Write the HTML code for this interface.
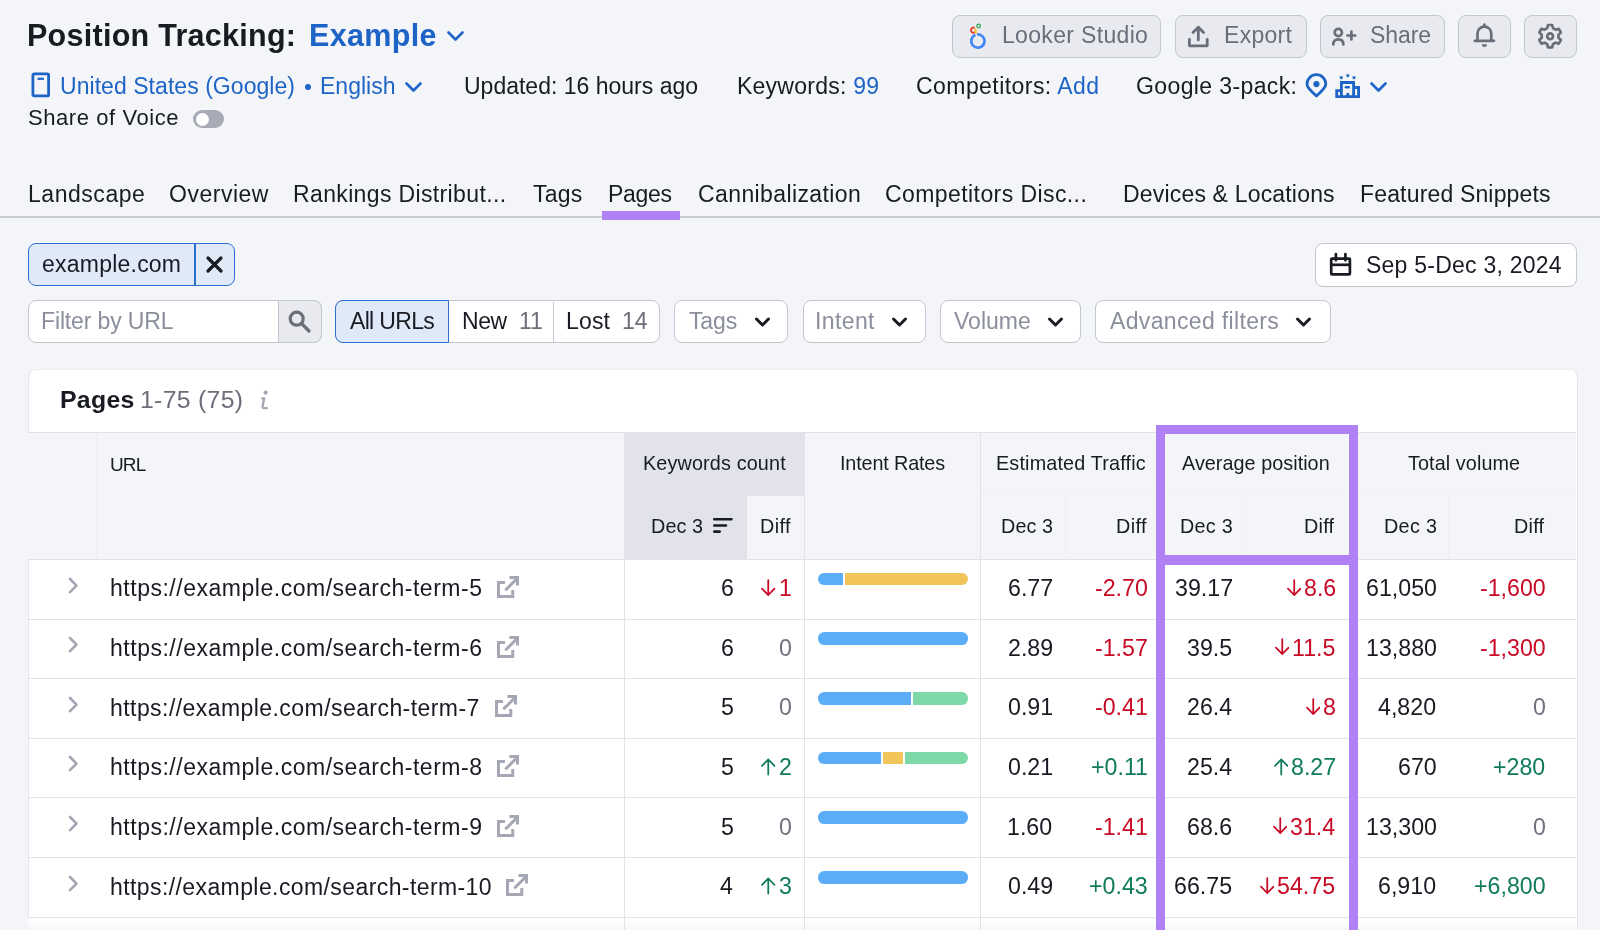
<!DOCTYPE html>
<html><head><meta charset="utf-8"><style>
html,body{margin:0;padding:0;}
body{width:1600px;height:930px;overflow:hidden;position:relative;background:#f4f5f9;font-family:"Liberation Sans",sans-serif;}
.t{will-change:transform;position:absolute;white-space:nowrap;line-height:1;}
.b{position:absolute;}
</style></head><body>
<div class="t" id="t1" style="left:27.00px;top:20.18px;font-size:30.5px;color:#191b23;font-weight:700;letter-spacing:0.272px;">Position Tracking:</div>
<div class="t" id="t2" style="left:309.00px;top:20.18px;font-size:30.5px;color:#1e64c6;font-weight:700;letter-spacing:0.350px;">Example</div>
<svg class="b" style="left:446px;top:30px" width="19" height="13" viewBox="0 0 19 13"><path d="M2.5 2.5 L9.5 9.5 L16.5 2.5" fill="none" stroke="#1e64c6" stroke-width="2.6" stroke-linecap="round" stroke-linejoin="round"/></svg>
<svg class="b" style="left:31px;top:72px" width="20" height="26" viewBox="0 0 20 26"><rect x="1.9" y="1.9" width="15.7" height="22" rx="1.2" fill="none" stroke="#1e64c6" stroke-width="2.8"/><path d="M6.5 6.8 H13" stroke="#1e64c6" stroke-width="2.2"/></svg>
<div class="t" id="t3" style="left:59.80px;top:74.53px;font-size:23px;color:#1e64c6;letter-spacing:0.048px;">United States (Google)</div>
<div class="b" style="left:304.5px;top:83.5px;width:6.5px;height:6.5px;background:#1e64c6;border-radius:50%"></div>
<div class="t" id="t4" style="left:320.00px;top:74.53px;font-size:23px;color:#1e64c6;">English</div>
<svg class="b" style="left:404px;top:81px" width="19" height="13" viewBox="0 0 19 13"><path d="M2.5 2.5 L9.5 9.5 L16.5 2.5" fill="none" stroke="#1e64c6" stroke-width="2.6" stroke-linecap="round" stroke-linejoin="round"/></svg>
<div class="t" id="t5" style="left:464.00px;top:74.53px;font-size:23px;color:#191b23;">Updated: 16 hours ago</div>
<div class="t" id="t6" style="left:736.60px;top:74.53px;font-size:23px;color:#191b23;letter-spacing:0.239px;">Keywords: <span style="color:#1e64c6">99</span></div>
<div class="t" id="t7" style="left:916.00px;top:74.53px;font-size:23px;color:#191b23;letter-spacing:0.442px;">Competitors: <span style="color:#1e64c6">Add</span></div>
<div class="t" id="t8" style="left:1136.00px;top:74.53px;font-size:23px;color:#191b23;letter-spacing:0.385px;">Google 3-pack:</div>
<svg class="b" style="left:1304px;top:72px" width="26" height="28" viewBox="0 0 26 28"><path d="M12.4 24.0 C6.5 19 3.0 15.5 3.0 12.1 A9.4 9.4 0 0 1 21.8 12.1 C21.8 15.5 18.3 19 12.4 24.0 Z" fill="none" stroke="#1e64c6" stroke-width="2.8" stroke-linejoin="round"/><circle cx="12.4" cy="12.1" r="3.1" fill="#1e64c6"/></svg>
<svg class="b" style="left:1334px;top:72px" width="28" height="28" viewBox="0 0 28 28"><g fill="#1e64c6"><path fill-rule="evenodd" d="M1.3 26 V17.25 H6 V9.1 H21 V14.1 H26 V26 Z M4.1 20 H6 V23.2 H4.1 Z M8.8 11.9 H18.2 V23.2 H15.4 V22.3 A1.58 1.58 0 0 0 12.25 22.3 V23.2 H8.8 Z M21 16.9 H23.2 V23.2 H21 Z"/><rect x="10.7" y="14.1" width="5.3" height="2.5" rx="1.25"/><path d="M7.25 3.20 L7.87 4.75 L9.53 4.86 L8.25 5.92 L8.66 7.54 L7.25 6.65 L5.84 7.54 L6.25 5.92 L4.97 4.86 L6.63 4.75ZM13.80 1.20 L14.42 2.75 L16.08 2.86 L14.80 3.92 L15.21 5.54 L13.80 4.65 L12.39 5.54 L12.80 3.92 L11.52 2.86 L13.18 2.75ZM20.00 3.20 L20.62 4.75 L22.28 4.86 L21.00 5.92 L21.41 7.54 L20.00 6.65 L18.59 7.54 L19.00 5.92 L17.72 4.86 L19.38 4.75Z"/></g></svg>
<svg class="b" style="left:1369px;top:81px" width="20" height="13" viewBox="0 0 20 13"><path d="M2.5 2.5 L9.5 9.5 L16.5 2.5" fill="none" stroke="#1e64c6" stroke-width="2.6" stroke-linecap="round" stroke-linejoin="round"/></svg>
<div class="t" id="t9" style="left:28.40px;top:107.27px;font-size:22px;color:#191b23;letter-spacing:0.575px;">Share of Voice</div>
<div class="b" style="left:193px;top:110px;width:31px;height:18px;background:#a8aab5;border-radius:9px"></div>
<div class="b" style="left:195.5px;top:112.5px;width:13.0px;height:13.0px;background:#fff;border-radius:50%"></div>
<div class="b" style="left:952px;top:14.6px;width:209px;height:43.0px;background:#e9eaf0;border:1.7px solid #c3c6ce;border-radius:8px;box-sizing:border-box"></div>
<div class="b" style="left:1174.5px;top:14.6px;width:132.0px;height:43.0px;background:#e9eaf0;border:1.7px solid #c3c6ce;border-radius:8px;box-sizing:border-box"></div>
<div class="b" style="left:1320px;top:14.6px;width:124.5px;height:43.0px;background:#e9eaf0;border:1.7px solid #c3c6ce;border-radius:8px;box-sizing:border-box"></div>
<div class="b" style="left:1458px;top:14.6px;width:53px;height:43.0px;background:#e9eaf0;border:1.7px solid #c3c6ce;border-radius:8px;box-sizing:border-box"></div>
<div class="b" style="left:1524px;top:14.6px;width:53px;height:43.0px;background:#e9eaf0;border:1.7px solid #c3c6ce;border-radius:8px;box-sizing:border-box"></div>
<div class="t" id="t10" style="left:1002.00px;top:23.83px;font-size:23px;color:#6b6e7a;letter-spacing:0.327px;">Looker Studio</div>
<div class="t" id="t11" style="left:1224.00px;top:23.83px;font-size:23px;color:#6b6e7a;letter-spacing:0.300px;">Export</div>
<div class="t" id="t12" style="left:1370.00px;top:23.83px;font-size:23px;color:#6b6e7a;letter-spacing:-0.094px;">Share</div>
<svg class="b" style="left:966px;top:20px" width="24" height="32" viewBox="0 0 24 32"><path d="M10.98 14.47 A6.6 6.6 0 1 1 9.43 14.88" fill="none" stroke="#4285f4" stroke-width="2.6"/><path d="M8.77 7.85 A2.6 2.6 0 1 0 8.77 12.45" fill="none" stroke="#ea4335" stroke-width="1.9"/><circle cx="12.6" cy="6" r="1.8" fill="none" stroke="#34a853" stroke-width="1.3"/><path d="M9.4 9.4 L9.9 12.6" stroke="#fbbc04" stroke-width="1.9" stroke-linecap="round"/></svg>
<svg class="b" style="left:1186px;top:24px" width="26" height="25" viewBox="0 0 26 25"><g fill="none" stroke="#6b6e7a" stroke-width="2.8" stroke-linecap="round" stroke-linejoin="round"><path d="M3.4 15.5 V21.8 H21.2 V15.5"/><path d="M12.3 16 V3.5"/><path d="M7 8.5 L12.3 3.2 L17.6 8.5"/></g></svg>
<svg class="b" style="left:1330px;top:26px" width="30" height="22" viewBox="0 0 30 22"><g fill="none" stroke="#6b6e7a" stroke-width="2.7" stroke-linecap="round"><circle cx="8.3" cy="6.5" r="3.6"/><path d="M3.3 18.5 C3.3 14.8 5.5 13.4 8.3 13.4 C11.1 13.4 13.3 14.8 13.3 18.5"/><path d="M17.5 9.5 H25.3 M21.4 5.6 V13.4"/></g></svg>
<svg class="b" style="left:1472px;top:22px" width="25" height="28" viewBox="0 0 25 28"><g fill="none" stroke="#6b6e7a" stroke-width="2.7" stroke-linecap="round" stroke-linejoin="round"><path d="M5.5 18.8 V11.5 A6.9 6.9 0 0 1 19.3 11.5 V18.8"/><path d="M2.8 18.8 H22"/><path d="M12.4 2.5 V4.5"/></g><path d="M9.8 22.3 H15 A2.6 2.6 0 0 1 9.8 22.3 Z" fill="#6b6e7a"/></svg>
<svg class="b" style="left:1537px;top:22px" width="27" height="28" viewBox="0 0 27 28"><g fill="none" stroke="#6b6e7a" stroke-width="2.7" stroke-linejoin="round"><path d="M11 3 H15.2 L16 6.2 L18.6 7.7 L21.8 6.8 L23.9 10.4 L21.5 12.7 V15.7 L23.9 18 L21.8 21.6 L18.6 20.7 L16 22.2 L15.2 25.4 H11 L10.2 22.2 L7.6 20.7 L4.4 21.6 L2.3 18 L4.7 15.7 V12.7 L2.3 10.4 L4.4 6.8 L7.6 7.7 L10.2 6.2 Z"/><circle cx="13.1" cy="14.2" r="2.9"/></g></svg>
<div class="t" id="t13" style="left:27.80px;top:182.63px;font-size:23px;color:#191b23;letter-spacing:0.538px;">Landscape</div>
<div class="t" id="t14" style="left:168.60px;top:182.63px;font-size:23px;color:#191b23;letter-spacing:0.514px;">Overview</div>
<div class="t" id="t15" style="left:293.40px;top:182.63px;font-size:23px;color:#191b23;letter-spacing:0.362px;">Rankings Distribut...</div>
<div class="t" id="t16" style="left:533.20px;top:182.63px;font-size:23px;color:#191b23;letter-spacing:0.192px;">Tags</div>
<div class="t" id="t17" style="left:607.60px;top:182.63px;font-size:23px;color:#191b23;letter-spacing:-0.312px;">Pages</div>
<div class="t" id="t18" style="left:698.20px;top:182.63px;font-size:23px;color:#191b23;letter-spacing:0.396px;">Cannibalization</div>
<div class="t" id="t19" style="left:885.20px;top:182.63px;font-size:23px;color:#191b23;letter-spacing:0.419px;">Competitors Disc...</div>
<div class="t" id="t20" style="left:1123.00px;top:182.63px;font-size:23px;color:#191b23;letter-spacing:0.179px;">Devices &amp; Locations</div>
<div class="t" id="t21" style="left:1360.40px;top:182.63px;font-size:23px;color:#191b23;letter-spacing:0.163px;">Featured Snippets</div>
<div class="b" style="left:0px;top:216px;width:1600px;height:2px;background:#caccd3"></div>
<div class="b" style="left:601.5px;top:211px;width:78.0px;height:9px;background:#b080f5"></div>
<div class="b" style="left:28.3px;top:243.3px;width:206.29999999999998px;height:43.0px;background:#e0e9f8;border:1.6px solid #2c6fd0;border-radius:8px;box-sizing:border-box"></div>
<div class="b" style="left:194.3px;top:243.3px;width:1.5999999999999943px;height:43.0px;background:#2c6fd0"></div>
<div class="t" id="t22" style="left:42.20px;top:252.83px;font-size:23px;color:#191b23;letter-spacing:0.225px;">example.com</div>
<svg class="b" style="left:205px;top:255px" width="19" height="19" viewBox="0 0 19 19"><path d="M3 3 L16 16 M16 3 L3 16" stroke="#191b23" stroke-width="3.2" stroke-linecap="round"/></svg>
<div class="b" style="left:1314.5px;top:243.3px;width:262.0px;height:43.39999999999998px;background:#fff;border:1.6px solid #c3c6ce;border-radius:8px;box-sizing:border-box"></div>
<svg class="b" style="left:1328px;top:250px" width="26" height="28" viewBox="0 0 26 28"><g fill="none" stroke="#191b23" stroke-width="2.7"><rect x="3.2" y="8.6" width="18.7" height="15.85" rx="1"/><path d="M3.2 14.8 H21.9"/><path d="M7.9 4 V10.3 M17.4 4 V10.3" stroke-linecap="round"/></g></svg>
<div class="t" id="t23" style="left:1365.80px;top:253.53px;font-size:23px;color:#191b23;letter-spacing:0.241px;">Sep 5-Dec 3, 2024</div>
<div class="b" style="left:28.4px;top:300px;width:293.20000000000005px;height:43px;background:#fff;border:1.6px solid #c3c6ce;border-radius:8px;box-sizing:border-box"></div>
<div class="b" style="left:277.5px;top:300px;width:44.10000000000002px;height:43px;background:#e9eaf0;border:1.6px solid #c3c6ce;border-radius:0 8px 8px 0;box-sizing:border-box"></div>
<div class="t" id="t24" style="left:41.40px;top:309.53px;font-size:23px;color:#8b8f9c;letter-spacing:-0.137px;">Filter by URL</div>
<svg class="b" style="left:287px;top:309px" width="26" height="26" viewBox="0 0 26 26"><g fill="none" stroke="#6c6e79" stroke-width="3.2" stroke-linecap="round"><circle cx="9.7" cy="9.7" r="6.5"/><path d="M14.5 14.5 L22 22"/></g></svg>
<div class="b" style="left:334.7px;top:300px;width:325.09999999999997px;height:43px;background:#fff;border:1.6px solid #c3c6ce;border-radius:8px;box-sizing:border-box"></div>
<div class="b" style="left:334.7px;top:300px;width:114.80000000000001px;height:43px;background:#e0e9f8;border:1.6px solid #2c6fd0;border-radius:8px 0 0 8px;box-sizing:border-box"></div>
<div class="b" style="left:552.5px;top:301.5px;width:1.5px;height:40.0px;background:#c3c6ce"></div>
<div class="t" id="t25" style="left:350.20px;top:309.53px;font-size:23px;color:#191b23;letter-spacing:-0.671px;">All URLs</div>
<div class="t" id="t26" style="left:462.00px;top:309.53px;font-size:23px;color:#191b23;letter-spacing:-0.462px;">New</div>
<div class="t" id="t27" style="left:519.00px;top:309.53px;font-size:23px;color:#6c6e79;">11</div>
<div class="t" id="t28" style="left:566.00px;top:309.53px;font-size:23px;color:#191b23;letter-spacing:0.167px;">Lost</div>
<div class="t" id="t29" style="left:622.00px;top:309.53px;font-size:23px;color:#6c6e79;">14</div>
<div class="b" style="left:673.8px;top:300px;width:114.70000000000005px;height:43px;background:#fff;border:1.6px solid #c3c6ce;border-radius:8px;box-sizing:border-box"></div>
<div class="t" id="t30" style="left:688.60px;top:309.53px;font-size:23px;color:#8b8f9c;letter-spacing:-0.142px;">Tags</div>
<svg class="b" style="left:753.8px;top:316px" width="18" height="13" viewBox="0 0 18 13"><path d="M2.5 3 L8.5 9 L14.5 3" fill="none" stroke="#191b23" stroke-width="3" stroke-linecap="round" stroke-linejoin="round"/></svg>
<div class="b" style="left:802.6px;top:300px;width:123.19999999999993px;height:43px;background:#fff;border:1.6px solid #c3c6ce;border-radius:8px;box-sizing:border-box"></div>
<div class="t" id="t31" style="left:814.60px;top:309.53px;font-size:23px;color:#8b8f9c;letter-spacing:0.380px;">Intent</div>
<svg class="b" style="left:891px;top:316px" width="18" height="13" viewBox="0 0 18 13"><path d="M2.5 3 L8.5 9 L14.5 3" fill="none" stroke="#191b23" stroke-width="3" stroke-linecap="round" stroke-linejoin="round"/></svg>
<div class="b" style="left:939.9px;top:300px;width:141.30000000000007px;height:43px;background:#fff;border:1.6px solid #c3c6ce;border-radius:8px;box-sizing:border-box"></div>
<div class="t" id="t32" style="left:954.00px;top:309.53px;font-size:23px;color:#8b8f9c;letter-spacing:0.010px;">Volume</div>
<svg class="b" style="left:1046.5px;top:316px" width="18" height="13" viewBox="0 0 18 13"><path d="M2.5 3 L8.5 9 L14.5 3" fill="none" stroke="#191b23" stroke-width="3" stroke-linecap="round" stroke-linejoin="round"/></svg>
<div class="b" style="left:1095.2px;top:300px;width:235.5px;height:43px;background:#fff;border:1.6px solid #c3c6ce;border-radius:8px;box-sizing:border-box"></div>
<div class="t" id="t33" style="left:1109.80px;top:309.53px;font-size:23px;color:#8b8f9c;letter-spacing:0.345px;">Advanced filters</div>
<svg class="b" style="left:1295px;top:316px" width="18" height="13" viewBox="0 0 18 13"><path d="M2.5 3 L8.5 9 L14.5 3" fill="none" stroke="#191b23" stroke-width="3" stroke-linecap="round" stroke-linejoin="round"/></svg>
<div class="b" style="left:27.5px;top:368.5px;width:1550.0px;height:631.5px;background:#fff;border:1.2px solid #e4e5eb;border-top-color:#eceef2;border-radius:8px 8px 0 0;box-sizing:border-box"></div>
<div class="t" id="t34" style="left:59.60px;top:387.80px;font-size:24.8px;color:#191b23;font-weight:700;letter-spacing:0.319px;">Pages</div>
<div class="t" id="t35" style="left:140.00px;top:387.80px;font-size:24.8px;color:#6c6e79;letter-spacing:0.297px;">1-75 (75)</div>
<svg class="b" style="left:256px;top:388px" width="16" height="23" viewBox="0 0 16 23"><circle cx="9.6" cy="4.6" r="2.1" fill="#a3a6b2"/><path d="M6.3 10.3 H8.2 L6.6 18.2 C6.3 19.6 7.2 20.2 8.4 20.2 H10.8" fill="none" stroke="#a3a6b2" stroke-width="2.3" stroke-linecap="round" stroke-linejoin="round"/></svg>
<div class="b" style="left:28px;top:432px;width:1548px;height:127px;background:#f4f5f9"></div>
<div class="b" style="left:28px;top:432px;width:1548px;height:1px;background:#e2e3ea"></div>
<div class="b" style="left:28px;top:559px;width:1548px;height:1px;background:#e2e3ea"></div>
<div class="b" style="left:625px;top:433px;width:179px;height:62px;background:#e1e2ea"></div>
<div class="b" style="left:625px;top:495px;width:122px;height:64px;background:#e1e2ea"></div>
<div class="b" style="left:625px;top:495px;width:179px;height:1px;background:#e6e7ee"></div>
<div class="t" id="t36" style="left:109.80px;top:454.91px;font-size:19px;color:#191b23;letter-spacing:-0.900px;">URL</div>
<div class="t" id="t37" style="left:643.00px;top:454.24px;font-size:19.8px;color:#191b23;letter-spacing:0.148px;">Keywords count</div>
<div class="t" id="t38" style="left:651.00px;top:517.44px;font-size:19.8px;color:#191b23;letter-spacing:0.112px;">Dec 3</div>
<svg class="b" style="left:712px;top:517px" width="22" height="17" viewBox="0 0 22 17"><g stroke="#191b23" stroke-width="2.6" stroke-linecap="round"><path d="M2.3 2.3 H19.5 M2.3 8.5 H14 M2.3 14.6 H7.7"/></g></svg>
<div class="t" id="t39" style="left:760.00px;top:517.44px;font-size:19.8px;color:#191b23;letter-spacing:0.433px;">Diff</div>
<div class="t" id="t40" style="left:839.80px;top:454.24px;font-size:19.8px;color:#191b23;letter-spacing:-0.141px;">Intent Rates</div>
<div class="t" id="t41" style="left:996.00px;top:454.24px;font-size:19.8px;color:#191b23;letter-spacing:0.167px;">Estimated Traffic</div>
<div class="t" id="t42" style="left:1000.80px;top:517.44px;font-size:19.8px;color:#191b23;letter-spacing:0.112px;">Dec 3</div>
<div class="t" id="t43" style="left:1116.00px;top:517.44px;font-size:19.8px;color:#191b23;letter-spacing:0.367px;">Diff</div>
<div class="t" id="t44" style="left:1182.00px;top:454.24px;font-size:19.8px;color:#191b23;letter-spacing:0.045px;">Average position</div>
<div class="t" id="t45" style="left:1180.20px;top:517.44px;font-size:19.8px;color:#191b23;letter-spacing:0.263px;">Dec 3</div>
<div class="t" id="t46" style="left:1304.00px;top:517.44px;font-size:19.8px;color:#191b23;letter-spacing:0.233px;">Diff</div>
<div class="t" id="t47" style="left:1408.00px;top:454.24px;font-size:19.8px;color:#191b23;letter-spacing:0.098px;">Total volume</div>
<div class="t" id="t48" style="left:1384.00px;top:517.44px;font-size:19.8px;color:#191b23;letter-spacing:0.312px;">Dec 3</div>
<div class="t" id="t49" style="left:1513.80px;top:517.44px;font-size:19.8px;color:#191b23;letter-spacing:0.233px;">Diff</div>
<div class="b" style="left:96px;top:433px;width:1px;height:126px;background:#eff0f5"></div>
<div class="b" style="left:1065px;top:496px;width:1px;height:63px;background:#eff0f5"></div>
<div class="b" style="left:1245px;top:496px;width:1px;height:63px;background:#eff0f5"></div>
<div class="b" style="left:1448px;top:496px;width:1px;height:63px;background:#eff0f5"></div>
<div class="b" style="left:981px;top:495px;width:595px;height:1px;background:#f0f1f5"></div>
<div class="b" style="left:28px;top:918px;width:1548px;height:12px;background:linear-gradient(#fff,#f6f7f9)"></div>
<div class="b" style="left:28px;top:619px;width:1548px;height:1px;background:#e2e3ea"></div>
<div class="b" style="left:28px;top:678px;width:1548px;height:1px;background:#e2e3ea"></div>
<div class="b" style="left:28px;top:738px;width:1548px;height:1px;background:#e2e3ea"></div>
<div class="b" style="left:28px;top:797px;width:1548px;height:1px;background:#e2e3ea"></div>
<div class="b" style="left:28px;top:857px;width:1548px;height:1px;background:#e2e3ea"></div>
<div class="b" style="left:28px;top:917px;width:1548px;height:1px;background:#e2e3ea"></div>
<div class="b" style="left:624px;top:433px;width:1px;height:567px;background:#e2e3ea"></div>
<div class="b" style="left:804px;top:433px;width:1px;height:567px;background:#e2e3ea"></div>
<div class="b" style="left:980px;top:433px;width:1px;height:567px;background:#e2e3ea"></div>
<svg class="b" style="left:66px;top:575.5px" width="15" height="19" viewBox="0 0 15 19"><path d="M4 3 L10.5 9.6 L4 16.2" fill="none" stroke="#a3a6b2" stroke-width="2.6" stroke-linecap="round" stroke-linejoin="round"/></svg>
<div class="t" id="t50" style="left:110.00px;top:577.33px;font-size:23px;color:#191b23;letter-spacing:0.520px;">https://example.com/search-term-5</div>
<svg class="b" style="left:497px;top:576.0px" width="23" height="23" viewBox="0 0 23 23"><g fill="none" stroke="#a5a8b4" stroke-width="3"><path d="M8 6.5 H1.5 V20.5 H15.75 V14"/><path d="M8.3 14.3 L20 2.6"/><path d="M12.5 1.5 H20.5 V9.5"/></g></svg>
<div class="t" id="t51" style="left:721.12px;top:577.16px;font-size:23.2px;color:#191b23;">6</div>
<div class="t" id="t52" style="left:778.53px;top:577.16px;font-size:23.2px;color:#c80a26;">1</div>
<svg class="b" style="left:761.3000000000001px;top:578.8px" width="14.5" height="18" viewBox="0 0 14.5 18"><path d="M7.25 1 V16 M1 9.7 L7.25 16 L13.5 9.7" fill="none" stroke="#c80a26" stroke-width="1.75" stroke-linecap="round" stroke-linejoin="miter"/></svg>
<div class="t" id="t53" style="left:1095.12px;top:577.16px;font-size:23.2px;color:#c80a26;">-2.70</div>
<div class="t" id="t54" style="left:1303.75px;top:577.16px;font-size:23.2px;color:#c80a26;">8.6</div>
<svg class="b" style="left:1286.7px;top:578.8px" width="14.5" height="18" viewBox="0 0 14.5 18"><path d="M7.25 1 V16 M1 9.7 L7.25 16 L13.5 9.7" fill="none" stroke="#c80a26" stroke-width="1.75" stroke-linecap="round" stroke-linejoin="miter"/></svg>
<div class="t" id="t55" style="left:1480.25px;top:577.16px;font-size:23.2px;color:#c80a26;">-1,600</div>
<div class="b" style="left:818.3px;top:572.80px;width:149.50px;height:12.6px;border-radius:6.3px;overflow:hidden;background:#fff"><div style="position:absolute;left:0.00px;top:0;width:24.90px;height:100%;background:#5aadf6"></div><div style="position:absolute;left:26.70px;top:0;width:122.80px;height:100%;background:#f2c55a"></div></div>
<div class="t" id="t56" style="left:1007.88px;top:577.16px;font-size:23.2px;color:#191b23;">6.77</div>
<div class="t" id="t57" style="left:1175.00px;top:577.16px;font-size:23.2px;color:#191b23;">39.17</div>
<div class="t" id="t58" style="left:1366.00px;top:577.16px;font-size:23.2px;color:#191b23;">61,050</div>
<svg class="b" style="left:66px;top:635.15px" width="15" height="19" viewBox="0 0 15 19"><path d="M4 3 L10.5 9.6 L4 16.2" fill="none" stroke="#a3a6b2" stroke-width="2.6" stroke-linecap="round" stroke-linejoin="round"/></svg>
<div class="t" id="t59" style="left:110.00px;top:636.98px;font-size:23px;color:#191b23;letter-spacing:0.520px;">https://example.com/search-term-6</div>
<svg class="b" style="left:497px;top:635.65px" width="23" height="23" viewBox="0 0 23 23"><g fill="none" stroke="#a5a8b4" stroke-width="3"><path d="M8 6.5 H1.5 V20.5 H15.75 V14"/><path d="M8.3 14.3 L20 2.6"/><path d="M12.5 1.5 H20.5 V9.5"/></g></svg>
<div class="t" id="t60" style="left:721.12px;top:636.81px;font-size:23.2px;color:#191b23;">6</div>
<div class="t" id="t61" style="left:778.53px;top:636.81px;font-size:23.2px;color:#6f727d;">0</div>
<div class="t" id="t62" style="left:1095.12px;top:636.81px;font-size:23.2px;color:#c80a26;">-1.57</div>
<div class="t" id="t63" style="left:1291.62px;top:636.81px;font-size:23.2px;color:#c80a26;">11.5</div>
<svg class="b" style="left:1274.7px;top:638.4499999999999px" width="14.5" height="18" viewBox="0 0 14.5 18"><path d="M7.25 1 V16 M1 9.7 L7.25 16 L13.5 9.7" fill="none" stroke="#c80a26" stroke-width="1.75" stroke-linecap="round" stroke-linejoin="miter"/></svg>
<div class="t" id="t64" style="left:1480.25px;top:636.81px;font-size:23.2px;color:#c80a26;">-1,300</div>
<div class="b" style="left:818.3px;top:632.45px;width:149.50px;height:12.6px;border-radius:6.3px;overflow:hidden;background:#fff"><div style="position:absolute;left:0.00px;top:0;width:149.50px;height:100%;background:#5aadf6"></div></div>
<div class="t" id="t65" style="left:1007.88px;top:636.81px;font-size:23.2px;color:#191b23;">2.89</div>
<div class="t" id="t66" style="left:1186.88px;top:636.81px;font-size:23.2px;color:#191b23;">39.5</div>
<div class="t" id="t67" style="left:1366.00px;top:636.81px;font-size:23.2px;color:#191b23;">13,880</div>
<svg class="b" style="left:66px;top:694.8px" width="15" height="19" viewBox="0 0 15 19"><path d="M4 3 L10.5 9.6 L4 16.2" fill="none" stroke="#a3a6b2" stroke-width="2.6" stroke-linecap="round" stroke-linejoin="round"/></svg>
<div class="t" id="t68" style="left:110.00px;top:696.63px;font-size:23px;color:#191b23;letter-spacing:0.438px;">https://example.com/search-term-7</div>
<svg class="b" style="left:494.6px;top:695.3px" width="23" height="23" viewBox="0 0 23 23"><g fill="none" stroke="#a5a8b4" stroke-width="3"><path d="M8 6.5 H1.5 V20.5 H15.75 V14"/><path d="M8.3 14.3 L20 2.6"/><path d="M12.5 1.5 H20.5 V9.5"/></g></svg>
<div class="t" id="t69" style="left:721.12px;top:696.46px;font-size:23.2px;color:#191b23;">5</div>
<div class="t" id="t70" style="left:778.53px;top:696.46px;font-size:23.2px;color:#6f727d;">0</div>
<div class="t" id="t71" style="left:1095.12px;top:696.46px;font-size:23.2px;color:#c80a26;">-0.41</div>
<div class="t" id="t72" style="left:1323.12px;top:696.46px;font-size:23.2px;color:#c80a26;">8</div>
<svg class="b" style="left:1305.7px;top:698.0999999999999px" width="14.5" height="18" viewBox="0 0 14.5 18"><path d="M7.25 1 V16 M1 9.7 L7.25 16 L13.5 9.7" fill="none" stroke="#c80a26" stroke-width="1.75" stroke-linecap="round" stroke-linejoin="miter"/></svg>
<div class="t" id="t73" style="left:1533.12px;top:696.46px;font-size:23.2px;color:#6f727d;">0</div>
<div class="b" style="left:818.3px;top:692.10px;width:149.50px;height:12.6px;border-radius:6.3px;overflow:hidden;background:#fff"><div style="position:absolute;left:0.00px;top:0;width:92.70px;height:100%;background:#5aadf6"></div><div style="position:absolute;left:94.50px;top:0;width:55.00px;height:100%;background:#7ed9a8"></div></div>
<div class="t" id="t74" style="left:1007.88px;top:696.46px;font-size:23.2px;color:#191b23;">0.91</div>
<div class="t" id="t75" style="left:1186.88px;top:696.46px;font-size:23.2px;color:#191b23;">26.4</div>
<div class="t" id="t76" style="left:1378.00px;top:696.46px;font-size:23.2px;color:#191b23;">4,820</div>
<svg class="b" style="left:66px;top:754.45px" width="15" height="19" viewBox="0 0 15 19"><path d="M4 3 L10.5 9.6 L4 16.2" fill="none" stroke="#a3a6b2" stroke-width="2.6" stroke-linecap="round" stroke-linejoin="round"/></svg>
<div class="t" id="t77" style="left:110.00px;top:756.28px;font-size:23px;color:#191b23;letter-spacing:0.520px;">https://example.com/search-term-8</div>
<svg class="b" style="left:497px;top:754.95px" width="23" height="23" viewBox="0 0 23 23"><g fill="none" stroke="#a5a8b4" stroke-width="3"><path d="M8 6.5 H1.5 V20.5 H15.75 V14"/><path d="M8.3 14.3 L20 2.6"/><path d="M12.5 1.5 H20.5 V9.5"/></g></svg>
<div class="t" id="t78" style="left:721.12px;top:756.11px;font-size:23.2px;color:#191b23;">5</div>
<div class="t" id="t79" style="left:778.53px;top:756.11px;font-size:23.2px;color:#0f7a5c;">2</div>
<svg class="b" style="left:761.3000000000001px;top:757.75px" width="14.5" height="18" viewBox="0 0 14.5 18"><path d="M7.25 16.5 V1.5 M1 7.8 L7.25 1.5 L13.5 7.8" fill="none" stroke="#0f7a5c" stroke-width="1.75" stroke-linecap="round" stroke-linejoin="miter"/></svg>
<div class="t" id="t80" style="left:1091.00px;top:756.11px;font-size:23.2px;color:#0f7a5c;">+0.11</div>
<div class="t" id="t81" style="left:1290.88px;top:756.11px;font-size:23.2px;color:#0f7a5c;">8.27</div>
<svg class="b" style="left:1273.7px;top:757.75px" width="14.5" height="18" viewBox="0 0 14.5 18"><path d="M7.25 16.5 V1.5 M1 7.8 L7.25 1.5 L13.5 7.8" fill="none" stroke="#0f7a5c" stroke-width="1.75" stroke-linecap="round" stroke-linejoin="miter"/></svg>
<div class="t" id="t82" style="left:1492.75px;top:756.11px;font-size:23.2px;color:#0f7a5c;">+280</div>
<div class="b" style="left:818.3px;top:751.75px;width:149.50px;height:12.6px;border-radius:6.3px;overflow:hidden;background:#fff"><div style="position:absolute;left:0.00px;top:0;width:62.70px;height:100%;background:#5aadf6"></div><div style="position:absolute;left:64.50px;top:0;width:20.10px;height:100%;background:#f2c55a"></div><div style="position:absolute;left:86.60px;top:0;width:62.90px;height:100%;background:#7ed9a8"></div></div>
<div class="t" id="t83" style="left:1007.88px;top:756.11px;font-size:23.2px;color:#191b23;">0.21</div>
<div class="t" id="t84" style="left:1186.88px;top:756.11px;font-size:23.2px;color:#191b23;">25.4</div>
<div class="t" id="t85" style="left:1398.25px;top:756.11px;font-size:23.2px;color:#191b23;">670</div>
<svg class="b" style="left:66px;top:814.1px" width="15" height="19" viewBox="0 0 15 19"><path d="M4 3 L10.5 9.6 L4 16.2" fill="none" stroke="#a3a6b2" stroke-width="2.6" stroke-linecap="round" stroke-linejoin="round"/></svg>
<div class="t" id="t86" style="left:110.00px;top:815.93px;font-size:23px;color:#191b23;letter-spacing:0.520px;">https://example.com/search-term-9</div>
<svg class="b" style="left:497px;top:814.6px" width="23" height="23" viewBox="0 0 23 23"><g fill="none" stroke="#a5a8b4" stroke-width="3"><path d="M8 6.5 H1.5 V20.5 H15.75 V14"/><path d="M8.3 14.3 L20 2.6"/><path d="M12.5 1.5 H20.5 V9.5"/></g></svg>
<div class="t" id="t87" style="left:721.12px;top:815.76px;font-size:23.2px;color:#191b23;">5</div>
<div class="t" id="t88" style="left:778.53px;top:815.76px;font-size:23.2px;color:#6f727d;">0</div>
<div class="t" id="t89" style="left:1095.12px;top:815.76px;font-size:23.2px;color:#c80a26;">-1.41</div>
<div class="t" id="t90" style="left:1289.88px;top:815.76px;font-size:23.2px;color:#c80a26;">31.4</div>
<svg class="b" style="left:1272.7px;top:817.4px" width="14.5" height="18" viewBox="0 0 14.5 18"><path d="M7.25 1 V16 M1 9.7 L7.25 16 L13.5 9.7" fill="none" stroke="#c80a26" stroke-width="1.75" stroke-linecap="round" stroke-linejoin="miter"/></svg>
<div class="t" id="t91" style="left:1533.12px;top:815.76px;font-size:23.2px;color:#6f727d;">0</div>
<div class="b" style="left:818.3px;top:811.40px;width:149.50px;height:12.6px;border-radius:6.3px;overflow:hidden;background:#fff"><div style="position:absolute;left:0.00px;top:0;width:149.50px;height:100%;background:#5aadf6"></div></div>
<div class="t" id="t92" style="left:1006.88px;top:815.76px;font-size:23.2px;color:#191b23;">1.60</div>
<div class="t" id="t93" style="left:1186.88px;top:815.76px;font-size:23.2px;color:#191b23;">68.6</div>
<div class="t" id="t94" style="left:1366.00px;top:815.76px;font-size:23.2px;color:#191b23;">13,300</div>
<svg class="b" style="left:66px;top:873.75px" width="15" height="19" viewBox="0 0 15 19"><path d="M4 3 L10.5 9.6 L4 16.2" fill="none" stroke="#a3a6b2" stroke-width="2.6" stroke-linecap="round" stroke-linejoin="round"/></svg>
<div class="t" id="t95" style="left:110.00px;top:875.58px;font-size:23px;color:#191b23;letter-spacing:0.408px;">https://example.com/search-term-10</div>
<svg class="b" style="left:506.4px;top:874.25px" width="23" height="23" viewBox="0 0 23 23"><g fill="none" stroke="#a5a8b4" stroke-width="3"><path d="M8 6.5 H1.5 V20.5 H15.75 V14"/><path d="M8.3 14.3 L20 2.6"/><path d="M12.5 1.5 H20.5 V9.5"/></g></svg>
<div class="t" id="t96" style="left:720.12px;top:875.41px;font-size:23.2px;color:#191b23;">4</div>
<div class="t" id="t97" style="left:778.53px;top:875.41px;font-size:23.2px;color:#0f7a5c;">3</div>
<svg class="b" style="left:761.3000000000001px;top:877.05px" width="14.5" height="18" viewBox="0 0 14.5 18"><path d="M7.25 16.5 V1.5 M1 7.8 L7.25 1.5 L13.5 7.8" fill="none" stroke="#0f7a5c" stroke-width="1.75" stroke-linecap="round" stroke-linejoin="miter"/></svg>
<div class="t" id="t98" style="left:1089.25px;top:875.41px;font-size:23.2px;color:#0f7a5c;">+0.43</div>
<div class="t" id="t99" style="left:1277.00px;top:875.41px;font-size:23.2px;color:#c80a26;">54.75</div>
<svg class="b" style="left:1259.7px;top:877.05px" width="14.5" height="18" viewBox="0 0 14.5 18"><path d="M7.25 1 V16 M1 9.7 L7.25 16 L13.5 9.7" fill="none" stroke="#c80a26" stroke-width="1.75" stroke-linecap="round" stroke-linejoin="miter"/></svg>
<div class="t" id="t100" style="left:1474.38px;top:875.41px;font-size:23.2px;color:#0f7a5c;">+6,800</div>
<div class="b" style="left:818.3px;top:871.05px;width:149.50px;height:12.6px;border-radius:6.3px;overflow:hidden;background:#fff"><div style="position:absolute;left:0.00px;top:0;width:149.50px;height:100%;background:#5aadf6"></div></div>
<div class="t" id="t101" style="left:1007.88px;top:875.41px;font-size:23.2px;color:#191b23;">0.49</div>
<div class="t" id="t102" style="left:1174.00px;top:875.41px;font-size:23.2px;color:#191b23;">66.75</div>
<div class="t" id="t103" style="left:1378.00px;top:875.41px;font-size:23.2px;color:#191b23;">6,910</div>
<div class="b" style="left:1156.4px;top:425.3px;width:201.19999999999982px;height:574.7px;border:9.3px solid #b080f5;border-bottom:none;box-sizing:border-box"></div>
<div class="b" style="left:1156.4px;top:555.2px;width:201.19999999999982px;height:9.5px;background:#b080f5"></div>
</body></html>
